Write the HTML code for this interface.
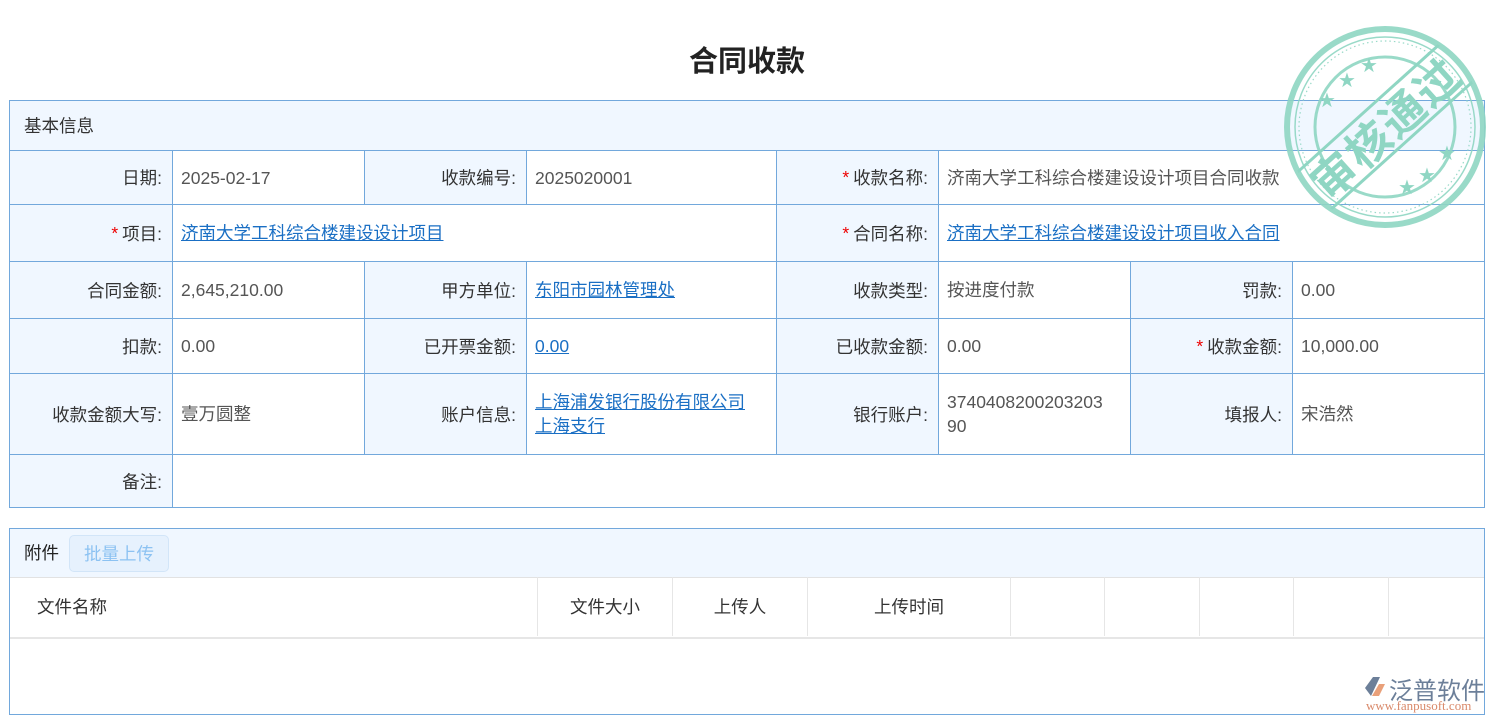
<!DOCTYPE html>
<html><head><meta charset="utf-8"><style>
*{margin:0;padding:0;box-sizing:border-box}
body{width:1494px;height:720px;background:#fff;position:relative;overflow:hidden;font-family:"Liberation Sans","Noto Sans CJK SC",sans-serif;font-size:17.5px;color:#333}
.c{position:absolute;border:1px solid #72a8dc;display:flex;align-items:center}
.l{background:#f0f7ff;justify-content:flex-end;padding-right:10px;color:#333}
.v{background:#fff;padding-left:8px;color:#555;line-height:24px}
a{color:#1a6fc4;text-decoration:underline}
.s{color:#e00;margin-right:4px}
.h{position:absolute;display:flex;align-items:center;justify-content:center;font-size:17.5px;color:#333;border-right:1px solid #e6e6e6;height:59px;top:577px}
</style></head><body>
<div style="position:absolute;top:38px;left:0;width:1494px;text-align:center;font-size:29px;font-weight:bold;color:#222">合同收款</div>

<div class="c" style="left:9px;top:100px;width:1476px;height:51px;background:#f0f7ff;padding-left:14px">基本信息</div>

<div class="c l" style="left:9px;top:150px;width:164px;height:55px">日期:</div>
<div class="c v" style="left:172px;top:150px;width:193px;height:55px">2025-02-17</div>
<div class="c l" style="left:364px;top:150px;width:163px;height:55px">收款编号:</div>
<div class="c v" style="left:526px;top:150px;width:251px;height:55px">2025020001</div>
<div class="c l" style="left:776px;top:150px;width:163px;height:55px"><span class="s">*</span>收款名称:</div>
<div class="c v" style="left:938px;top:150px;width:547px;height:55px">济南大学工科综合楼建设设计项目合同收款</div>

<div class="c l" style="left:9px;top:204px;width:164px;height:58px"><span class="s">*</span>项目:</div>
<div class="c v" style="left:172px;top:204px;width:605px;height:58px"><a>济南大学工科综合楼建设设计项目</a></div>
<div class="c l" style="left:776px;top:204px;width:163px;height:58px"><span class="s">*</span>合同名称:</div>
<div class="c v" style="left:938px;top:204px;width:547px;height:58px"><a>济南大学工科综合楼建设设计项目收入合同</a></div>

<div class="c l" style="left:9px;top:261px;width:164px;height:58px">合同金额:</div>
<div class="c v" style="left:172px;top:261px;width:193px;height:58px">2,645,210.00</div>
<div class="c l" style="left:364px;top:261px;width:163px;height:58px">甲方单位:</div>
<div class="c v" style="left:526px;top:261px;width:251px;height:58px"><a>东阳市园林管理处</a></div>
<div class="c l" style="left:776px;top:261px;width:163px;height:58px">收款类型:</div>
<div class="c v" style="left:938px;top:261px;width:193px;height:58px">按进度付款</div>
<div class="c l" style="left:1130px;top:261px;width:163px;height:58px">罚款:</div>
<div class="c v" style="left:1292px;top:261px;width:193px;height:58px">0.00</div>

<div class="c l" style="left:9px;top:318px;width:164px;height:56px">扣款:</div>
<div class="c v" style="left:172px;top:318px;width:193px;height:56px">0.00</div>
<div class="c l" style="left:364px;top:318px;width:163px;height:56px">已开票金额:</div>
<div class="c v" style="left:526px;top:318px;width:251px;height:56px"><a>0.00</a></div>
<div class="c l" style="left:776px;top:318px;width:163px;height:56px">已收款金额:</div>
<div class="c v" style="left:938px;top:318px;width:193px;height:56px">0.00</div>
<div class="c l" style="left:1130px;top:318px;width:163px;height:56px"><span class="s">*</span>收款金额:</div>
<div class="c v" style="left:1292px;top:318px;width:193px;height:56px">10,000.00</div>

<div class="c l" style="left:9px;top:373px;width:164px;height:82px">收款金额大写:</div>
<div class="c v" style="left:172px;top:373px;width:193px;height:82px">壹万圆整</div>
<div class="c l" style="left:364px;top:373px;width:163px;height:82px">账户信息:</div>
<div class="c v" style="left:526px;top:373px;width:251px;height:82px"><div><a>上海浦发银行股份有限公司</a><br><a>上海支行</a></div></div>
<div class="c l" style="left:776px;top:373px;width:163px;height:82px">银行账户:</div>
<div class="c v" style="left:938px;top:373px;width:193px;height:82px">3740408200203203<br>90</div>
<div class="c l" style="left:1130px;top:373px;width:163px;height:82px">填报人:</div>
<div class="c v" style="left:1292px;top:373px;width:193px;height:82px">宋浩然</div>

<div class="c l" style="left:9px;top:454px;width:164px;height:54px">备注:</div>
<div class="c v" style="left:172px;top:454px;width:1313px;height:54px"></div>

<div style="position:absolute;left:9px;top:528px;width:1476px;height:187px;border:1px solid #72a8dc"></div>
<div style="position:absolute;left:10px;top:529px;width:1474px;height:49px;background:#f0f7ff;border-bottom:1px solid #e2e2e2"></div>
<div style="position:absolute;left:24px;top:540px;font-size:17.5px;color:#222">附件</div>
<div style="position:absolute;left:69px;top:535px;width:100px;height:37px;background:#e6f1fd;border:1px solid #d2e5f8;border-radius:5px;color:#8cc2f2;font-size:17.5px;display:flex;align-items:center;justify-content:center">批量上传</div>
<div style="position:absolute;left:10px;top:637px;width:1474px;height:2px;background:#e6e6e6"></div>
<div class="h" style="left:10px;width:528px;justify-content:flex-start;padding-left:27px">文件名称</div>
<div class="h" style="left:538px;width:135px">文件大小</div>
<div class="h" style="left:673px;width:135px">上传人</div>
<div class="h" style="left:808px;width:203px">上传时间</div>
<div class="h" style="left:1011px;width:94px"></div>
<div class="h" style="left:1105px;width:95px"></div>
<div class="h" style="left:1200px;width:94px"></div>
<div class="h" style="left:1294px;width:95px"></div>

<div style="position:absolute;left:1363px;top:674px;width:26px;height:24px">
<svg width="26" height="24" viewBox="0 0 26 24"><path d="M2 14 L10 3 L17 3 L8 22 Z" fill="#6c7f99"/><path d="M9 22 L16 10 L22 10 L16 22Z" fill="#e9a07a"/></svg></div>
<div style="position:absolute;left:1389px;top:671px;font-size:24px;color:#6c7f99">泛普软件</div>
<div style="position:absolute;left:1366px;top:698px;font-family:'Liberation Serif',serif;font-size:13px;color:#d9896a">www.fanpusoft.com</div>

<svg style="position:absolute;left:1280px;top:22px" width="210" height="210" viewBox="0 0 210 210">
<defs><clipPath id="cp"><circle cx="105" cy="105" r="98"/></clipPath></defs>
<g fill="none" stroke="#8fd6c3" opacity="0.9">
<circle cx="105" cy="105" r="98" stroke-width="6"/>
<circle cx="105" cy="105" r="90" stroke-width="1.5"/>
<circle cx="105" cy="105" r="86" stroke-width="1.2" stroke-dasharray="1.5 3"/>
<circle cx="105" cy="105" r="70" stroke-width="3"/>
</g>
<g clip-path="url(#cp)"><g transform="rotate(-42 105 105)">
<line x1="0" y1="80" x2="210" y2="80" stroke="#8fd6c3" stroke-width="3"/>
<line x1="0" y1="130" x2="210" y2="130" stroke="#8fd6c3" stroke-width="3"/>
<text x="105" y="123" text-anchor="middle" font-family="Noto Sans CJK SC,sans-serif" font-weight="bold" font-size="44" fill="#8fd6c3" letter-spacing="2">审核通过</text>
</g></g>
<g fill="#8fd6c3" font-size="20" font-family="DejaVu Sans,sans-serif">
<text x="38" y="85">★</text><text x="58" y="65">★</text><text x="80" y="50">★</text>
<text x="118" y="172">★</text><text x="138" y="160">★</text><text x="158" y="138">★</text>
</g>
</svg>
</body></html>
